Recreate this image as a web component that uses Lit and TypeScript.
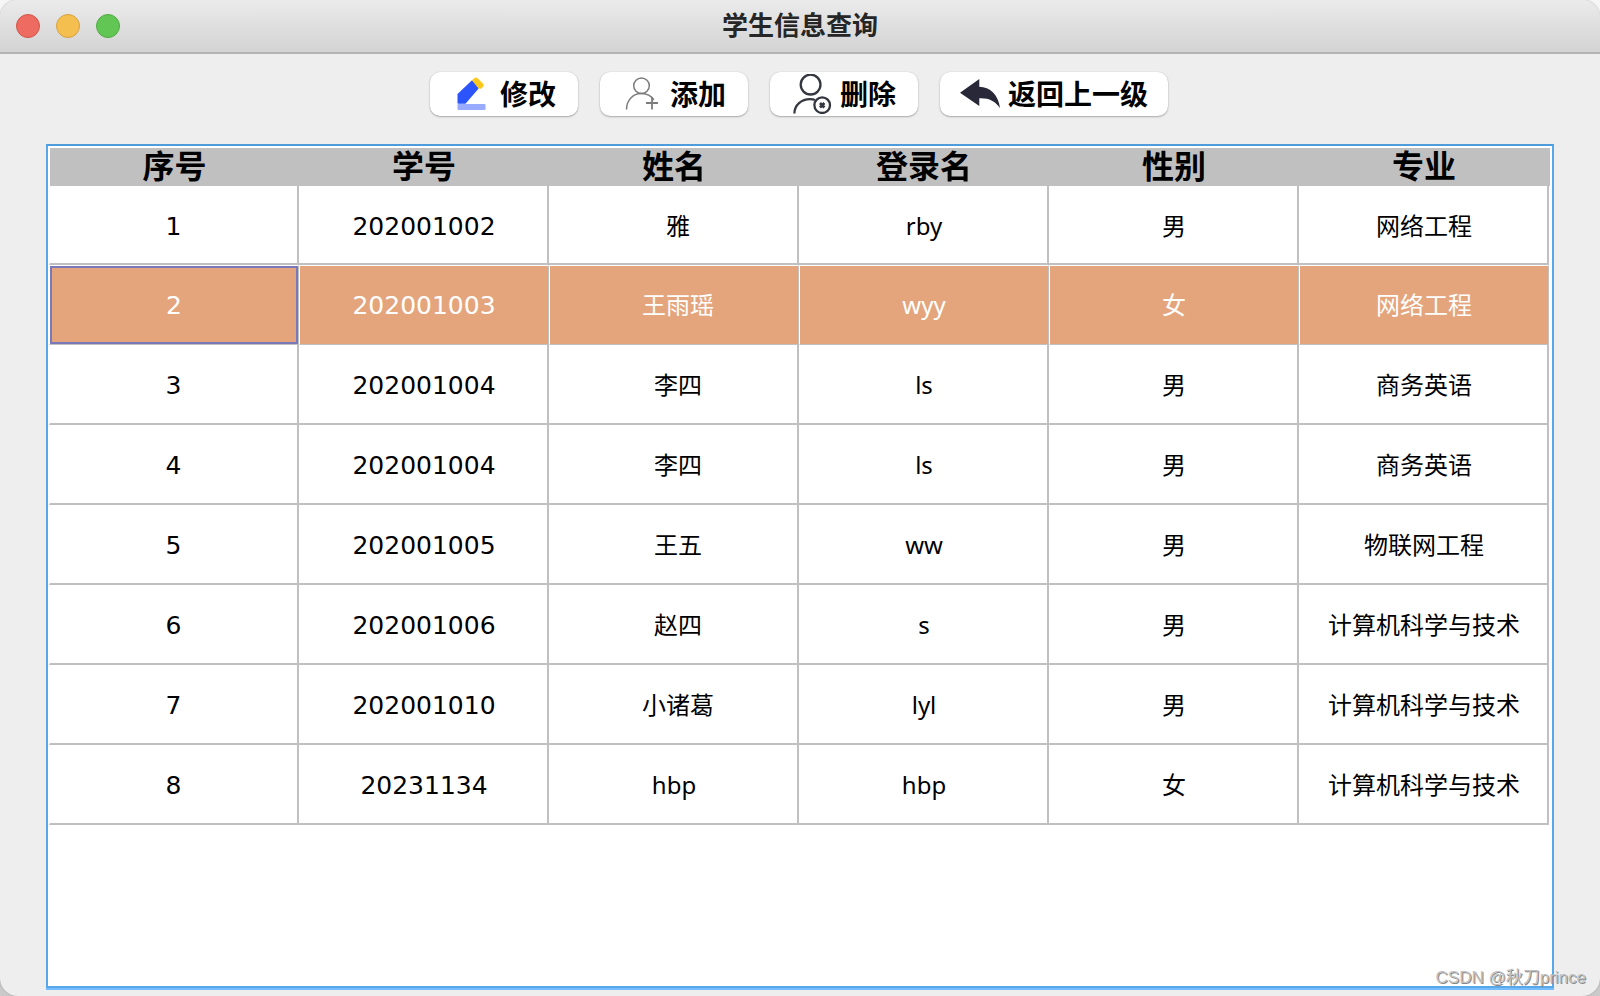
import { LitElement, html, css, svg } from "lit";
import { customElement, state } from "lit/decorators.js";
import { classMap } from "lit/directives/class-map.js";

interface Student {
  no: string;
  id: string;
  name: string;
  login: string;
  sex: string;
  major: string;
}

const columns = ["序号", "学号", "姓名", "登录名", "性别", "专业"];

const students: Student[] = [
  { no: "1", id: "202001002", name: "雅", login: "rby", sex: "男", major: "网络工程" },
  { no: "2", id: "202001003", name: "王雨瑶", login: "wyy", sex: "女", major: "网络工程" },
  { no: "3", id: "202001004", name: "李四", login: "ls", sex: "男", major: "商务英语" },
  { no: "4", id: "202001004", name: "李四", login: "ls", sex: "男", major: "商务英语" },
  { no: "5", id: "202001005", name: "王五", login: "ww", sex: "男", major: "物联网工程" },
  { no: "6", id: "202001006", name: "赵四", login: "s", sex: "男", major: "计算机科学与技术" },
  { no: "7", id: "202001010", name: "小诸葛", login: "lyl", sex: "男", major: "计算机科学与技术" },
  { no: "8", id: "20231134", name: "hbp", login: "hbp", sex: "女", major: "计算机科学与技术" },
];

const actions = [
  {
    label: "修改",
    icon: svg`
      <path d="M5.5 20 20 6.3 27.5 13.5 13.5 29.7H6.5Q5.5 29.7 5.5 28.5Z" fill="#2b55fb"/>
      <path d="M20 6.3 22.5 4Q24 2.8 25.5 4.2L31 9.5Q32.4 11.2 31 13L28.8 14.8L26.5 14.4Z" fill="#fdc81e"/>
      <rect x="5.5" y="30" width="28" height="6" rx="1" fill="#98abff"/>`,
  },
  {
    label: "添加",
    icon: svg`
      <g fill="none" stroke="#7c7c7c" stroke-width="1.5">
        <circle cx="19.5" cy="11.8" r="7.8"/>
        <path d="M4.5 35.5C4.5 26.5 10.5 19.6 19.5 19.6C25 19.6 29.3 22 31.8 26"/>
        <path d="M24 29H36M30 23V35.5" stroke-width="1.8"/>
      </g>`,
  },
  {
    label: "删除",
    icon: svg`
      <g fill="none" stroke="#34373f" stroke-width="2.3">
        <circle cx="18.6" cy="10.6" r="9.9"/>
        <path d="M2.4 39.5C2.4 31 9.5 25.2 18 25.2C20 25.2 21.5 25.4 23 26"/>
        <circle cx="30.2" cy="31.2" r="7.8"/>
        <path d="M28 29 32.4 33.4M32.4 29 28 33.4" stroke-width="2.8"/>
      </g>`,
  },
  {
    label: "返回上一级",
    icon: svg`
      <path d="M0 18.8 19.3 5V12.8C30 12.8 38.5 21 40 34C35 27 29 23.8 19.3 24.2V32Z" fill="#292839"/>`,
  },
];

@customElement("app-root")
export class AppRoot extends LitElement {
  @state() private selected = 1;

  static styles = css`
    :host {
      display: block;
      background: linear-gradient(#f6f6f6 50%, #cacaca 50%);
      font-family: "Noto Sans", "Noto Sans CJK SC", sans-serif;
      color: #000;
    }
    * {
      box-sizing: border-box;
    }
    .window {
      position: relative;
      display: flex;
      flex-direction: column;
      min-height: 100vh;
      background: #eee;
      border-radius: 18px;
      overflow: hidden;
      box-shadow: 0 0 2px #999;
    }
    .titlebar {
      display: grid;
      grid-template-columns: 1fr auto 1fr;
      align-items: center;
      height: 54px;
      padding: 0 16px;
      background: linear-gradient(#ebebeb, #d3d3d3);
      border-bottom: 2px solid #b3b3b3;
    }
    .lights {
      display: flex;
      gap: 16px;
    }
    .light {
      width: 24px;
      height: 24px;
      padding: 0;
      border: 1px solid;
      border-radius: 50%;
    }
    .close {
      background: #ed6b60;
      border-color: #d05548;
    }
    .minimize {
      background: #f5bf50;
      border-color: #d6a140;
    }
    .zoom {
      background: #62c655;
      border-color: #50a941;
    }
    .title {
      margin: 0;
      padding-bottom: 4px;
      font: bold 26px/36px "Noto Sans CJK SC", sans-serif;
      color: #262626;
    }
    .toolbar {
      display: flex;
      justify-content: center;
      gap: 22px;
      padding: 18px 22px 28px 20px;
    }
    .action {
      display: flex;
      align-items: center;
      justify-content: center;
      gap: 8px;
      min-width: 148px;
      height: 44px;
      padding: 0 20px;
      border: 0;
      border-radius: 10px;
      background: #fff;
      box-shadow: 0 1px 2px rgba(0, 0, 0, 0.28), 0 0 1px rgba(0, 0, 0, 0.2);
      font: bold 28px/40px "Noto Sans CJK SC", sans-serif;
      color: #000;
      white-space: nowrap;
    }
    .label {
      padding-bottom: 2px;
    }
    .icon {
      width: 40px;
      height: 40px;
      flex: none;
    }
    .pane {
      flex: 1;
      margin: 0 46px 8px;
      padding: 2px 3px 2px 1px;
      background: #fff;
      border: 2px solid #58a7e8;
      border-top-color: #4e9cdc;
      box-shadow: 0 2px #74bcfb;
    }
    .grid {
      width: 100%;
      table-layout: fixed;
      border-collapse: separate;
      border-spacing: 0;
      text-align: center;
    }
    .head {
      height: 38px;
      padding: 0 0 6px;
      background: #c0c0c0;
      background-clip: padding-box;
      font: bold 32px/32px "Noto Sans CJK SC", sans-serif;
    }
    .head:first-child {
      border-left: 1px solid #fff;
    }
    .head:last-child {
      box-shadow: 1px 0 #c0c0c0;
    }
    .cell {
      height: 80px;
      padding: 2px 0 0 2px;
      border: 0 solid #c0c0c0;
      border-width: 0 2px 2px 0;
      font-size: 24px;
      line-height: 36px;
      background-clip: padding-box;
      cursor: default;
    }
    .row:first-child .cell {
      height: 79px;
    }
    .cell:first-child {
      border-left: 1px solid #fff;
      padding-left: 0;
    }
    .digits {
      padding-top: 4px;
      font-family: "DejaVu Sans", sans-serif;
      font-size: 25px;
    }
    .hanzi {
      padding-left: 10px;
    }
    .selected .cell {
      padding-top: 0;
      padding-left: 0;
      border-width: 1px;
      border-top-color: #fff;
      border-left-color: #fff;
      background-color: #e4a57d;
      color: #fff;
    }
    .selected .digits {
      padding-top: 2px;
    }
    .selected .hanzi {
      padding-left: 8px;
    }
    .selected .cell:first-child {
      box-shadow: inset 0 0 0 2px #7a78b8;
    }
    .watermark {
      position: absolute;
      right: 14px;
      bottom: 6px;
      font: 17px/24px "Liberation Sans", "Noto Sans CJK SC", sans-serif;
      color: #c2c2c2;
      text-shadow: 1px 1px #888;
    }
  `;

  render() {
    return html`
      <main class="window">
        <header class="titlebar">
          <div class="lights">
            <button class="light close" aria-label="关闭"></button>
            <button class="light minimize" aria-label="最小化"></button>
            <button class="light zoom" aria-label="缩放"></button>
          </div>
          <h1 class="title">学生信息查询</h1>
        </header>
        <nav class="toolbar">
          ${actions.map(
            (a) => html`<button class="action">
              <svg class="icon" viewBox="0 0 40 40" aria-hidden="true">${a.icon}</svg>
              <span class="label">${a.label}</span>
            </button>`
          )}
        </nav>
        <section class="pane">
          <table class="grid">
            <thead>
              <tr>
                ${columns.map((c) => html`<th class="head" scope="col">${c}</th>`)}
              </tr>
            </thead>
            <tbody>
              ${students.map((s, i) => this.renderRow(s, i))}
            </tbody>
          </table>
        </section>
        <div class="watermark">CSDN @秋刀prince</div>
      </main>
    `;
  }

  private renderRow(s: Student, i: number) {
    const hanzi = /[\u4e00-\u9fff]/.test(s.name);
    return html`<tr
      class=${classMap({ row: true, selected: i === this.selected })}
      @click=${() => (this.selected = i)}
    >
      <td class="cell digits">${s.no}</td>
      <td class="cell digits">${s.id}</td>
      <td class=${classMap({ cell: true, hanzi })}>${s.name}</td>
      <td class="cell">${s.login}</td>
      <td class="cell">${s.sex}</td>
      <td class="cell">${s.major}</td>
    </tr>`;
  }
}
